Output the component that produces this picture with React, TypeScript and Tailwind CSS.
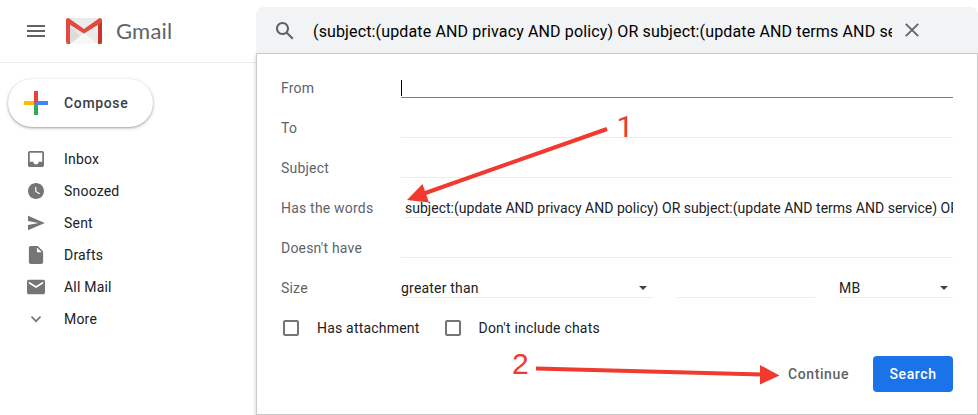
import React from 'react';

const QUERY = 'subject:(update AND privacy AND policy) OR subject:(update AND terms AND service) OR subject:(privacy)';

const folders = [
  { name: 'Inbox', scale: 0.889, path: 'M19 3H4.99c-1.11 0-1.98.89-1.98 2L3 19c0 1.1.88 2 1.99 2H19c1.1 0 2-.9 2-2V5c0-1.11-.9-2-2-2zm0 12h-4c0 1.66-1.35 3-3 3s-3-1.34-3-3H4.99V5H19v10z' },
  { name: 'Snoozed', scale: 0.8, path: 'M12 2C6.5 2 2 6.5 2 12s4.5 10 10 10 10-4.5 10-10S17.5 2 12 2zm4.2 14.2L11 13V7h1.500v5.200l4.500 2.700-.8 1.300z' },
  { name: 'Sent', scale: 0.8, path: 'M23 12L2.010 3v6.500l13 2.500-13 2.500V21z' },
  { name: 'Drafts', scale: 0.889, path: 'M6 2c-1.100 0-2 .9-2 2v16c0 1.100.9 2 2 2h12c1.100 0 2-.9 2-2V8l-6-6H6zm7 7V3.500L18.500 9H13z' },
  { name: 'All Mail', scale: 0.9, path: 'M20 4H4c-1.100 0-1.990.9-1.990 2L2 18c0 1.100.9 2 2 2h16c1.100 0 2-.9 2-2V6c0-1.100-.9-2-2-2zm0 4l-8 5-8-5V6l8 5 8-5v2z' },
  { name: 'More', scale: 0.85, path: 'M7.400 8.600L12 13.200l4.600-4.600L18 10l-6 6-6-6z' },
];

function FolderIcon({ path, scale }: { path: string; scale: number }) {
  return (
    <svg width="24" height="24" viewBox="0 0 24 24" fill="#757575">
      <path d={path} transform={`translate(12 12) scale(${scale}) translate(-12 -12)`} />
    </svg>
  );
}

function GmailLogo() {
  return (
    <svg width="36" height="26" viewBox="0 0 36 26" className="ml-[18px]">
      <path d="M2 0H34L36 2V24Q36 26 34 26H2Q0 26 0 24V2Z" fill="#e3e3e3" />
      <path d="M4 8L18 17L32 8V26H4Z" fill="#eaeaea" />
      <path d="M4 26L18 15L32 26Z" fill="#f7f7f7" />
      <path d="M4 8L14 18L4 26Z" fill="#dcdcdc" />
      <path d="M3 0H33L18 11Z" fill="#ececec" />
      <path d="M0 2.500V24Q0 26 2 26H4V6.800L18 15.500L32 6.800V26H34Q36 26 36 24V2.500C36 .2 34 -.5 32.500.7L18 11L3.500.7C2-.5 0 .2 0 2.500Z" fill="#e04b3f" />
      <path d="M32 7.300L36 4V24Q36 26 34 26H32Z" fill="#c8352b" />
    </svg>
  );
}

function Row({ label, children }: { label: string; children: React.ReactNode }) {
  return (
    <div className="flex h-10 items-center">
      <div className="w-[120px] shrink-0 text-[#5f6368]">{label}</div>
      {children}
    </div>
  );
}

function Caret() {
  return <span className="border-x-4 border-t-4 border-x-transparent border-t-[#444]" />;
}

function Checkbox({ label }: { label: string }) {
  return (
    <div className="flex items-center">
      <span className="mr-[18px] h-4 w-4 rounded-[2px] border-2 border-[#757575]" />
      <span>{label}</span>
    </div>
  );
}

export default function App() {
  return (
    <div className="relative flex h-[415px] w-[978px] overflow-hidden bg-white font-['Roboto',sans-serif] text-[14px] leading-5 tracking-[0.2px] text-[#202124]">
      <aside className="w-[256px] shrink-0">
        <header className="flex h-[63px] items-center border-b border-[#e8eef0] pl-[27px]">
          <div className="flex w-[18px] flex-col gap-[3px]">
            <span className="h-[2px] bg-[#5f6368]" />
            <span className="h-[2px] bg-[#5f6368]" />
            <span className="h-[2px] bg-[#5f6368]" />
          </div>
          <div className="ml-[3px]"><GmailLogo /></div>
          <span className="ml-[14px] font-['Lato',sans-serif] text-[22px] tracking-[0.2px] text-[#5f6368]">Gmail</span>
        </header>
        <button className="ml-2 mt-4 flex h-12 w-[145px] items-center rounded-full pl-4 text-[#3c4043] shadow-[0_1px_2px_rgba(60,64,67,0.35),0_1px_3px_1px_rgba(60,64,67,0.15)]">
          <svg width="24" height="24" viewBox="0 0 24 24">
            <path d="M10 0H14V12L10 14Z" fill="#ea4335" />
            <path d="M0 10H10V14H0Z" fill="#fbbc04" />
            <path d="M10 14L14 10V24H10Z" fill="#34a853" />
            <path d="M14 10H24V14H10Z" fill="#4285f4" />
          </svg>
          <span className="ml-4 font-medium tracking-[0.65px]">Compose</span>
        </button>
        <nav className="mt-4">
          {folders.map((f) => (
            <div key={f.name} className="flex h-8 items-center gap-4 pl-6">
              <FolderIcon path={f.path} scale={f.scale} />
              <span>{f.name}</span>
            </div>
          ))}
        </nav>
      </aside>
      <main className="flex w-[722px] flex-col pt-[7px]">
        <div className="flex h-[46px] shrink-0 items-center rounded-t-lg bg-[#f1f3f4] pl-[17px] pt-[2px]">
          <svg width="24" height="24" viewBox="0 0 24 24" fill="#5f6368">
            <path d="M20.490 19l-5.730-5.730C15.530 12.200 16 10.910 16 9.500 16 5.910 13.090 3 9.500 3S3 5.910 3 9.500 5.910 16 9.500 16c1.410 0 2.700-.47 3.770-1.240L19 20.490 20.490 19zM5 9.500C5 7.010 7.010 5 9.500 5S14 7.010 14 9.500 11.990 14 9.500 14 5 11.990 5 9.500z" />
          </svg>
          <div className="ml-[16px] mt-[2px] w-[579px] overflow-hidden whitespace-nowrap text-[16px] leading-6 tracking-[0.14px] text-black">({QUERY})</div>
          <svg width="14" height="14" viewBox="0 0 14 14" className="mb-[2px] ml-[13px]" stroke="#5f6368" strokeWidth="1.800">
            <path d="M.8.8L13.200 13.200M13.200.8L.8 13.200" />
          </svg>
        </div>
        <section className="h-[362px] border border-[#cacaca] bg-white pl-6 pt-[14px] pr-6 shadow-[0_2px_4px_rgba(0,0,0,0.2)]">
          <Row label="From">
            <div className="flex h-5 flex-1 items-end border-b border-[#4285f4] pb-px"><span className="h-4 w-px bg-black" /></div>
          </Row>
          <Row label="To"><div className="h-5 flex-1 border-b border-[#ececec]" /></Row>
          <Row label="Subject"><div className="h-5 flex-1 border-b border-[#ececec]" /></Row>
          <Row label="Has the words">
            <div className="ml-1 h-5 min-w-0 flex-1 overflow-hidden whitespace-nowrap border-b border-[#ececec] tracking-[0.013px]">{QUERY}</div>
          </Row>
          <Row label="Doesn't have"><div className="h-5 flex-1 border-b border-[#ececec]" /></Row>
          <Row label="Size">
            <div className="flex h-5 w-[252px] items-center justify-between border-b border-[#ececec] pr-[6px]"><span>greater than</span><Caret /></div>
            <div className="ml-6 h-5 w-[138px] border-b border-[#ececec]" />
            <div className="ml-6 flex h-5 flex-1 items-center justify-between border-b border-[#ececec] pr-[5px]"><span>MB</span><Caret /></div>
          </Row>
          <div className="flex h-10 items-center gap-[25px] pl-[2px]">
            <Checkbox label="Has attachment" />
            <Checkbox label="Don't include chats" />
          </div>
          <div className="mt-2 flex items-center justify-end gap-6 font-medium tracking-[0.6px]">
            <span className="text-[#5f6368]">Continue</span>
            <button className="h-9 w-20 rounded bg-[#1a73e8] text-white">Search</button>
          </div>
        </section>
      </main>
      <svg className="pointer-events-none absolute inset-0" width="978" height="415" fill="#f03a30" stroke="#f03a30">
        <path d="M607 129L424 193.500" strokeWidth="4" />
        <path d="M407 200L422.500 184L429 202.500Z" stroke="none" />
        <path d="M536 368.500L762 374.500" strokeWidth="4" />
        <path d="M779.500 375.500L760 365V384.500Z" stroke="none" />
        <text x="616.500" y="137" fontSize="30" stroke="none" fontFamily="Roboto" letterSpacing="0">1</text>
        <text x="512" y="374" fontSize="30" stroke="none" fontFamily="Liberation Sans" letterSpacing="0">2</text>
      </svg>
    </div>
  );
}
